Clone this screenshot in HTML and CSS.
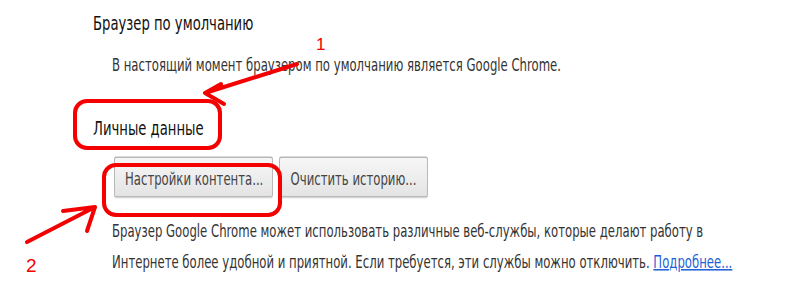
FILE: index.html
```html
<!DOCTYPE html>
<html lang="ru">
<head>
  <meta charset="UTF-8">
  <title>Настройки</title>
  <link rel="stylesheet" href="styles.css">
</head>
<body>
  <div class="page">
    <h2 class="section-title">Браузер по умолчанию</h2>
    <p class="section-text">В настоящий момент браузером по умолчанию является Google Chrome.</p>

    <h2 class="section-title title-privacy">Личные данные</h2>
    <div class="buttons">
      <button class="btn btn-content">Настройки контента...</button>
      <button class="btn btn-history">Очистить историю...</button>
    </div>
    <p class="section-text section-para">Браузер Google Chrome может использовать различные веб-службы, которые делают работу в<br>Интернете более удобной и приятной. Если требуется, эти службы можно отключить. <a href="#" class="more">Подробнее...</a></p>
  </div>

  <!-- red hand-drawn marks over the screenshot -->
  <svg class="marks" width="800" height="300" viewBox="0 0 800 300">
    <g fill="none" stroke="#f40000" stroke-width="4" stroke-linecap="round" stroke-linejoin="round">
      <rect x="75" y="101" width="145" height="47" rx="12"/>
      <rect x="104" y="165" width="176" height="50" rx="12"/>
      <path d="M297 64 L205 93 M205 93 L221 84 M205 93 L224 104"/>
      <path d="M27 242 L95 207 M95 207 L63 211 M95 207 L87 231"/>
    </g>
    <text x="316" y="50" class="mark-num">1</text>
    <text x="26" y="272" class="mark-num mark-num-2">2</text>
  </svg>
</body>
</html>
```

FILE: styles.css
```css
html, body {
  margin: 0;
  padding: 0;
  background: #fff;
}
body {
  width: 800px;
  height: 300px;
  overflow: hidden;
  position: relative;
  font-family: "DejaVu Sans", Tahoma, sans-serif;
  color: #333;
}
/* the source screenshot is stretched vertically */
.page {
  transform: scaleY(1.52);
  transform-origin: 0 0;
  padding-top: 6.3px;
}
.section-title {
  margin: 0;
  padding-left: 93px;
  font-size: 13.2px;
  font-weight: normal;
  line-height: 19px;
  color: #111;
}
.section-text {
  margin: 7.8px 0 0;
  padding-left: 112px;
  font-size: 11.7px;
  line-height: 20.4px;
  white-space: nowrap;
}
.title-privacy {
  margin-top: 21.3px;
}
.buttons {
  display: flex;
  gap: 6px;
  margin: 9.5px 0 0 114px;
}
.btn {
  font-family: inherit;
  font-size: 11.7px;
  line-height: 14px;
  color: #444;
  white-space: nowrap;
  padding: 6.3px 10px 4px 10px;
  border: 1px solid #b8b8b8;
  border-radius: 2px;
  background: linear-gradient(#f6f6f6, #e4e4e4);
  box-shadow: 0 1px 0 rgba(0,0,0,0.06);
}
.btn-content {
  width: 159px;
}
.btn-history {
  width: 149px;
}
.section-para {
  margin-top: 12.1px;
}
.more {
  color: #1d5fd6;
  text-decoration: underline;
}
.marks {
  position: absolute;
  left: 0;
  top: 0;
  pointer-events: none;
}
.mark-num {
  font-family: "Liberation Sans", Arial, sans-serif;
  font-size: 17px;
  fill: #f40000;
}
.mark-num-2 {
  font-size: 19px;
}
```
